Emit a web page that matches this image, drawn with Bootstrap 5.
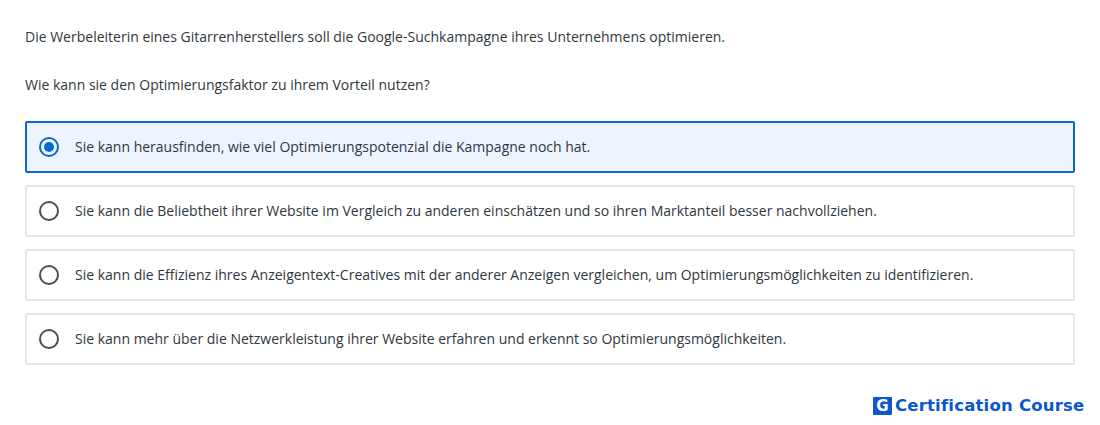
<!DOCTYPE html>
<html lang="de"><head><meta charset="utf-8">
<link href="https://cdn.jsdelivr.net/npm/bootstrap@5.3.0/dist/css/bootstrap.min.css" rel="stylesheet">
<style>
html,body{height:425px;overflow:hidden;background:#fff}
body{font-family:"Open Sans","Noto Sans",sans-serif;font-size:14px;line-height:20px;color:#2f373e;padding:27px 25px 0}
.q-text{margin:0 0 29px;height:20px}
.q-text.last{margin-bottom:26px;margin-top:-1px}
.opt-list{width:1050px}
.opt-row{height:52px;border:2px solid #e6e6e6;margin-bottom:12px;padding-left:12px;gap:16px;border-radius:2px}
.opt-row.picked{border-color:#0966d6;background:#eef4fe}
.dot{width:20px;height:20px;border:2.5px solid #4a5059;border-radius:50%;flex:none}
.picked .dot{border-color:#0966d6;padding:2.5px}
.picked .dot::after{content:"";display:block;width:10px;height:10px;background:#0966d6;border-radius:50%}
.brand{position:absolute;left:873px;top:396px;gap:3px;color:#0b57d0;font-family:"DejaVu Sans",sans-serif;font-weight:700;font-size:16.5px;line-height:20px;letter-spacing:.2px}
.brand-g{width:19px;height:18px;background:#0b57d0;color:#fff;border-radius:1px;font-size:15px;line-height:18px;text-align:center;letter-spacing:0}
</style></head><body>
<p class="q-text">Die Werbeleiterin eines Gitarrenherstellers soll die Google-Suchkampagne ihres Unternehmens optimieren.</p>
<p class="q-text last">Wie kann sie den Optimierungsfaktor zu ihrem Vorteil nutzen?</p>
<div class="opt-list">
<div class="opt-row picked d-flex align-items-center"><span class="dot"></span><span>Sie kann herausfinden, wie viel Optimierungspotenzial die Kampagne noch hat.</span></div>
<div class="opt-row d-flex align-items-center"><span class="dot"></span><span>Sie kann die Beliebtheit ihrer Website im Vergleich zu anderen einschätzen und so ihren Marktanteil besser nachvollziehen.</span></div>
<div class="opt-row d-flex align-items-center"><span class="dot"></span><span>Sie kann die Effizienz ihres Anzeigentext-Creatives mit der anderer Anzeigen vergleichen, um Optimierungsmöglichkeiten zu identifizieren.</span></div>
<div class="opt-row d-flex align-items-center"><span class="dot"></span><span>Sie kann mehr über die Netzwerkleistung ihrer Website erfahren und erkennt so Optimierungsmöglichkeiten.</span></div>
</div>
<div class="brand d-flex align-items-center"><span class="brand-g">G</span><span>Certification Course</span></div>
<script src="https://cdn.jsdelivr.net/npm/bootstrap@5.3.0/dist/js/bootstrap.bundle.min.js"></script>
</body></html>
